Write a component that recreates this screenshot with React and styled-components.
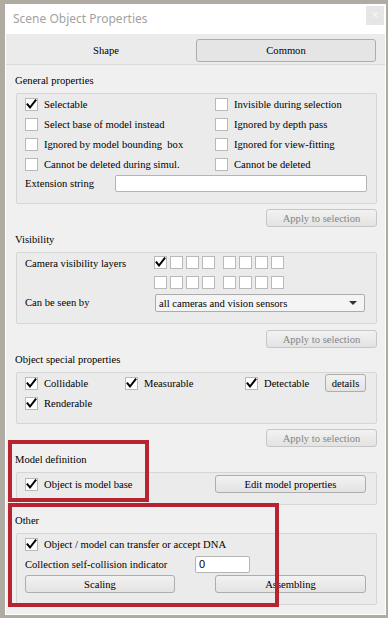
import React from "react";
import styled, { createGlobalStyle } from "styled-components";

const GlobalStyle = createGlobalStyle`
* {
  margin: 0;
  padding: 0;
  box-sizing: border-box;
}

body {
  background: #afaba3;
  font-family: "Liberation Serif", "DejaVu Serif", serif;
  font-size: 10.6px;
  color: #000000;
}
`;

const Page = styled.div`
  width: 388px;
  height: 618px;
  padding: 4px 2px 0 5px;
  overflow: hidden;
`;

const Window = styled.div`
  position: relative;
  width: 381px;
  background: #ffffff;
  padding: 0 1px 1px 1px;
`;

const TitleBar = styled.div`
  height: 30px;
  display: flex;
  align-items: center;
  justify-content: space-between;
  padding: 0 1px 0 7px;
`;

const Title = styled.div`
  font-family: "Noto Sans", "Liberation Sans", sans-serif;
  font-size: 12px;
  color: #a2a2a2;
  margin-top: -1px;
`;

const CloseButton = styled.div`
  width: 18px;
  height: 19px;
  margin-top: -7px;
  background: #e6e6e6;
  color: #f6f6f6;
  font-family: "Liberation Sans", sans-serif;
  font-size: 13px;
  line-height: 18px;
  text-align: center;
`;

const TabBar = styled.div`
  height: 31px;
  background: #ebebeb;
  border-bottom: 1px solid #dadada;
  display: grid;
  grid-template-columns: 180px 180px;
  padding: 5px 8px 0 10px;
`;

const Tab = styled.div`
  height: 23px;
  display: flex;
  align-items: center;
  justify-content: center;
  border: 1px solid ${(p) => (p.$active ? "#adadad" : "transparent")};
  border-radius: 3px;
  background: ${(p) => (p.$active ? "#e5e5e5" : "transparent")};
`;

const Content = styled.div`
  background: #f0f0f0;
  padding: 9px 8px 9px 10px;
  display: flex;
  flex-direction: column;
`;

const SectionLabel = styled.div`
  line-height: 14px;
  height: 14px;
  margin-left: -1px;
  margin-bottom: 5px;
  margin-top: ${(p) => p.$gap || 0}px;
`;

const GroupBox = styled.div`
  border: 1px solid #d6d6d6;
  border-radius: 2px;
  background: #ebebeb;
  padding: ${(p) => p.$top || 0}px 9px ${(p) => p.$bottom || 11}px 8px;
`;

const CheckGrid = styled.div`
  display: grid;
  grid-template-columns: ${(p) => p.$cols};
  grid-auto-rows: 20px;
  align-items: center;
`;

const CheckItem = styled.label`
  display: flex;
  align-items: center;
  gap: 6px;
  white-space: nowrap;
`;

const Box = styled.span`
  width: 13px;
  height: 13px;
  flex: none;
  background: #ffffff;
  border: 1px solid #b9b9b9;
  display: flex;
  align-items: center;
  justify-content: center;
`;

const Row = styled.div`
  display: flex;
  align-items: center;
  height: ${(p) => p.$h || 20}px;
`;

const RowLabel = styled.div`
  width: ${(p) => p.$w}px;
  flex: none;
  white-space: nowrap;
`;

const TextInput = styled.div`
  height: 17px;
  width: ${(p) => (p.$w ? `${p.$w}px` : "auto")};
  flex: ${(p) => (p.$w ? "none" : 1)};
  background: #ffffff;
  border: 1px solid #b4b4b4;
  border-radius: 2px;
  padding-left: 3px;
  line-height: 15px;
  font-family: "Liberation Sans", sans-serif;
  font-size: 11px;
`;

const Button = styled.div`
  height: 18px;
  width: ${(p) => p.$w}px;
  display: flex;
  align-items: center;
  justify-content: center;
  border: 1px solid ${(p) => (p.$disabled ? "#c6c6c6" : "#adadad")};
  border-radius: 3px;
  background: linear-gradient(#f2f2f2, #e3e3e3);
  color: ${(p) => (p.$disabled ? "#858585" : "#000000")};
  white-space: nowrap;
`;

const ApplyRow = styled.div`
  display: flex;
  justify-content: flex-end;
  margin-top: ${(p) => p.$mt}px;
`;

const CameraGrid = styled.div`
  display: flex;
  flex-direction: column;
  gap: 7px;
`;

const CameraLine = styled.div`
  display: flex;
  gap: 8px;
`;

const CameraSet = styled.div`
  display: flex;
  gap: 3px;
`;

const Select = styled.div`
  width: 210px;
  height: 18px;
  margin-left: 1px;
  border: 1px solid #acacac;
  border-radius: 2px;
  background: #f4f4f4;
  display: flex;
  align-items: center;
  justify-content: space-between;
  padding: 0 7px 0 3px;
`;

const Arrow = styled.span`
  width: 0;
  height: 0;
  border-left: 4px solid transparent;
  border-right: 4px solid transparent;
  border-top: 4px solid #333333;
`;

const ButtonPair = styled.div`
  display: grid;
  grid-template-columns: 190px 151px;
  margin-top: ${(p) => p.$mt || 0}px;
  align-items: center;
`;

const Highlight = styled.div`
  position: absolute;
  left: ${(p) => p.$x}px;
  top: ${(p) => p.$y}px;
  width: ${(p) => p.$w}px;
  height: ${(p) => p.$h}px;
  border: 4px solid #b7232f;
  pointer-events: none;
`;

const VisibilityBox = styled.div`
  display: grid;
  grid-template-columns: 129px 1fr;
  row-gap: 5px;
  align-items: start;
`;

const CameraLabel = styled.div`
  line-height: 13px;
  margin-top: 1px;
`;

const SeenLabel = styled.div`
  line-height: 18px;
`;

const CheckBox = ({ checked }) => (
  <Box>
    {checked && (
      <svg width="11" height="11" viewBox="0 0 11 11">
        <path
          d="M1.5 5.5 L4 8.5 L9.5 1.5"
          fill="none"
          stroke="#000"
          strokeWidth="2"
          strokeLinecap="square"
        />
      </svg>
    )}
  </Box>
);

const Check = ({ checked, children }) => (
  <CheckItem>
    <CheckBox checked={checked} />
    {children}
  </CheckItem>
);

const CameraLayers = () => {
  const rows = [
    [true, false, false, false, false, false, false, false],
    [false, false, false, false, false, false, false, false],
  ];
  return (
    <CameraGrid>
      {rows.map((row, i) => (
        <CameraLine key={i}>
          <CameraSet>
            {row.slice(0, 4).map((c, j) => (
              <CheckBox key={j} checked={c} />
            ))}
          </CameraSet>
          <CameraSet>
            {row.slice(4).map((c, j) => (
              <CheckBox key={j} checked={c} />
            ))}
          </CameraSet>
        </CameraLine>
      ))}
    </CameraGrid>
  );
};

export default function App() {
  return (
    <>
      <GlobalStyle />
      <Page>
        <Window>
          <TitleBar>
            <Title>Scene Object Properties</Title>
            <CloseButton>×</CloseButton>
          </TitleBar>
          <TabBar>
            <Tab>Shape</Tab>
            <Tab $active>Common</Tab>
          </TabBar>
          <Content>
            <SectionLabel>General properties</SectionLabel>
            <GroupBox>
              <CheckGrid $cols="190px 1fr">
                <Check checked>Selectable</Check>
                <Check>Invisible during selection</Check>
                <Check>Select base of model instead</Check>
                <Check>Ignored by depth pass</Check>
                <Check>Ignored by model bounding&nbsp; box</Check>
                <Check>Ignored for view-fitting</Check>
                <Check>Cannot be deleted during simul.</Check>
                <Check>Cannot be deleted</Check>
              </CheckGrid>
              <Row $h={18}>
                <RowLabel $w={90}>Extension string</RowLabel>
                <TextInput />
              </Row>
            </GroupBox>
            <ApplyRow $mt={5}>
              <Button $w={111} $disabled>
                Apply to selection
              </Button>
            </ApplyRow>

            <SectionLabel $gap={6}>Visibility</SectionLabel>
            <GroupBox $top={3}>
              <VisibilityBox>
                <CameraLabel>Camera visibility layers</CameraLabel>
                <CameraLayers />
                <SeenLabel>Can be seen by</SeenLabel>
                <Select>
                  <span>all cameras and vision sensors</span>
                  <Arrow />
                </Select>
              </VisibilityBox>
            </GroupBox>
            <ApplyRow $mt={6}>
              <Button $w={111} $disabled>
                Apply to selection
              </Button>
            </ApplyRow>

            <SectionLabel $gap={5}>Object special properties</SectionLabel>
            <GroupBox $bottom={10}>
              <CheckGrid $cols="100px 120px 80px 41px">
                <Check checked>Collidable</Check>
                <Check checked>Measurable</Check>
                <Check checked>Detectable</Check>
                <Button $w={41}>details</Button>
                <Check checked>Renderable</Check>
              </CheckGrid>
            </GroupBox>
            <ApplyRow $mt={5}>
              <Button $w={111} $disabled>
                Apply to selection
              </Button>
            </ApplyRow>

            <SectionLabel $gap={6}>Model definition</SectionLabel>
            <GroupBox $top={1} $bottom={10}>
              <CheckGrid $cols="190px 151px">
                <Check checked>Object is model base</Check>
                <Button $w={151}>Edit model properties</Button>
              </CheckGrid>
            </GroupBox>

            <SectionLabel $gap={9}>Other</SectionLabel>
            <GroupBox>
              <Row>
                <Check checked>Object / model can transfer or accept DNA</Check>
              </Row>
              <Row>
                <RowLabel $w={170}>Collection self-collision indicator</RowLabel>
                <TextInput $w={55}>0</TextInput>
              </Row>
              <ButtonPair $mt={1}>
                <Button $w={150}>Scaling</Button>
                <Button $w={151}>Assembling</Button>
              </ButtonPair>
            </GroupBox>
          </Content>
          <Highlight $x={3} $y={436} $w={141} $h={62} />
          <Highlight $x={3} $y={499} $w={271} $h={104} />
        </Window>
      </Page>
    </>
  );
}
